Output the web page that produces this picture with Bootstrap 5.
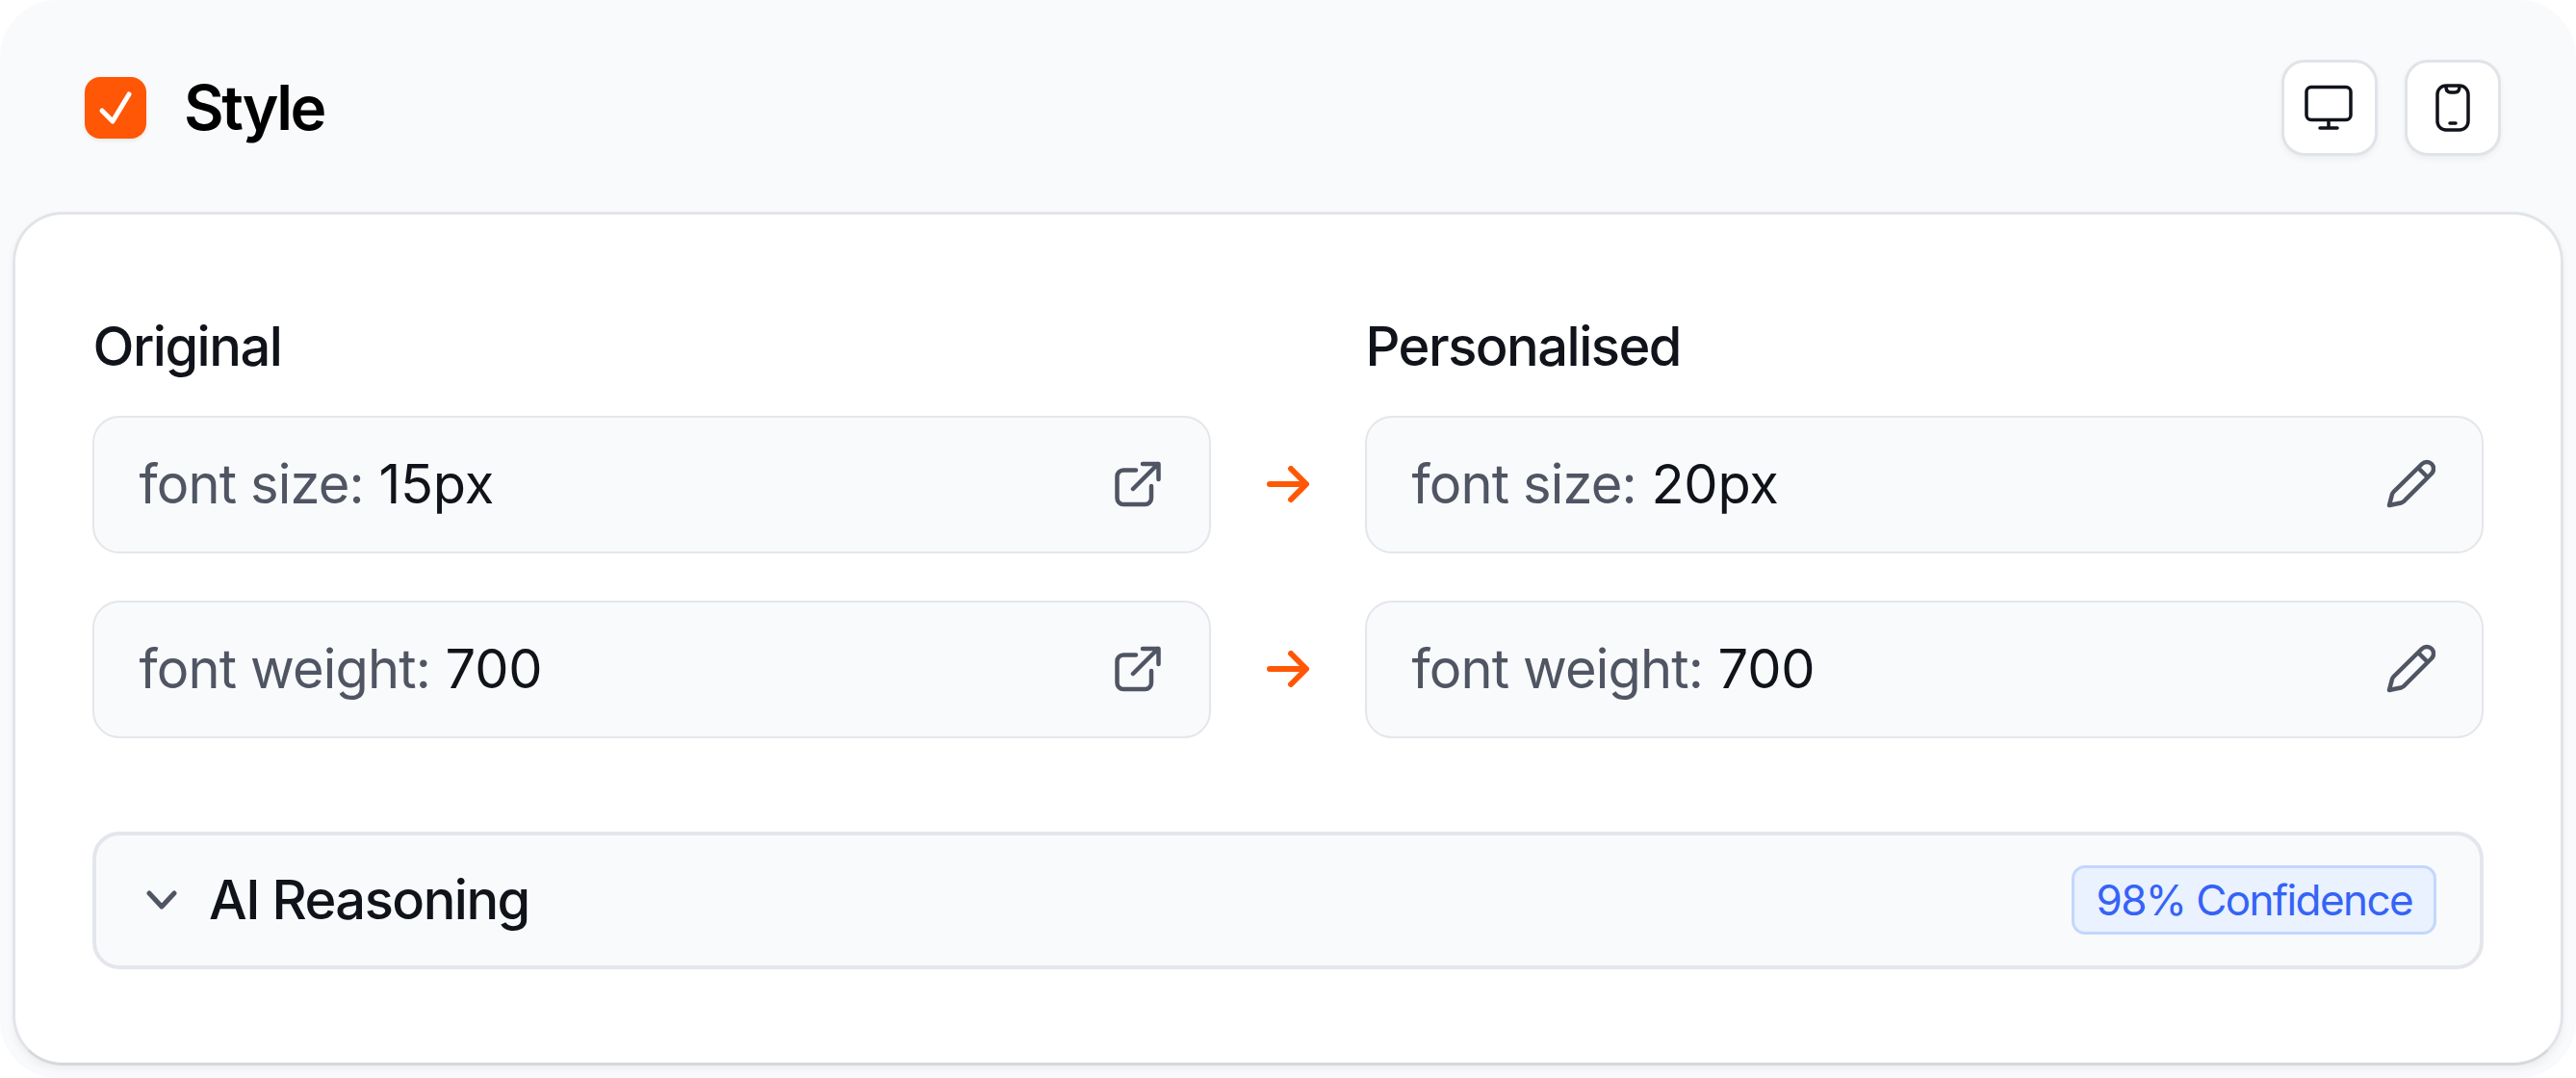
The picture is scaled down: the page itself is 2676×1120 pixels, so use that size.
<!DOCTYPE html>
<html lang="en">
<head>
<meta charset="utf-8">
<title>Style</title>
<link href="https://cdn.jsdelivr.net/npm/bootstrap@5.3.0/dist/css/bootstrap.min.css" rel="stylesheet">
<style>
html,body{margin:0;background:#fff;font-family:Inter,"Liberation Sans",sans-serif;}
body{width:2676px;height:1120px;overflow:hidden;}
.frame{width:2676px;height:1120px;background:#f9fafb;border-radius:60px;display:flex;flex-direction:column;padding:0 13px 13px;}
.head{height:220px;flex:none;padding:0 65px 0 75px;}
.logo{width:64px;height:64px;border-radius:16px;background:#ff5705;box-shadow:0 2px 4px rgba(0,0,0,.08);margin-top:4px;}
.logo svg{display:block;}
.ttl{font-size:64px;font-weight:600;color:#000;margin-left:39px;line-height:1;letter-spacing:-2.4px;margin-top:4px;}
.tools{gap:28px;}
.tool{width:100px;height:100px;background:#fff;border:3px solid #e1e3e9;border-radius:24px;box-shadow:0 3px 6px rgba(0,0,0,.05);padding:0;margin-top:4px;}
.panel{flex:1;background:#fff;border:3.5px solid #e2e4ea;border-bottom-color:#d6d8dd;border-radius:52px;box-shadow:0 4px 8px rgba(0,0,0,.05);padding:0 80px;}
.lbl{font-size:56px;font-weight:500;line-height:1;color:#10131a;height:40px;margin-top:116.5px;margin-bottom:52px;padding-left:.5px;letter-spacing:-1.5px;display:flex;align-items:center;}
.cols{display:grid;grid-template-columns:1162px 160px 1162px;}
.cell{height:143px;background:#f9fafb;border:2px solid #e4e6eb;border-radius:28px;padding:0 50px 0 46.5px;font-size:56px;letter-spacing:-.2px;color:#10131a;}
.cell.edit{padding-right:48px;}
.k{color:#4f5563;letter-spacing:-.85px;}
.gaprow{height:49px;grid-column:1/4;}
.reason{height:143px;background:#f9fafb;border:4px solid #e3e6eb;border-radius:28px;margin-top:97px;padding:0 45px 0 52px;}
.reason-t{font-size:56px;font-weight:500;color:#10131a;margin-left:33px;letter-spacing:-1.5px;}
.conf{height:72px;background:#eaf1ff;border:3px solid #c3d7fe;border-radius:14px;color:#3563f6;font-size:44px;letter-spacing:-1.6px;padding:0 22px;font-weight:400;}
</style>
</head>
<body>
<div class="frame">
  <div class="head d-flex align-items-center">
    <div class="logo"><svg width="64" height="64" viewBox="0 0 64 64" fill="none"><path d="M18 35L29 46L46 18" stroke="#fff" stroke-width="5" stroke-linecap="round" stroke-linejoin="round"/></svg></div>
    <div class="ttl">Style</div>
    <div class="ms-auto d-flex tools">
      <button type="button" class="tool d-flex align-items-center justify-content-center" aria-label="Desktop"><svg width="64" height="64" viewBox="0 0 64 64" fill="none" stroke="#10131a" stroke-width="3.500" stroke-linecap="round" stroke-linejoin="round"><rect x="8" y="10.500" width="46" height="34" rx="5"/><path d="M31 45V53M22 53H40"/></svg></button>
      <button type="button" class="tool d-flex align-items-center justify-content-center" aria-label="Mobile"><svg width="64" height="64" viewBox="0 0 64 64" fill="none" stroke="#10131a" stroke-width="3.500" stroke-linecap="round" stroke-linejoin="round"><rect x="16" y="9" width="32" height="46" rx="9"/><path d="M25 10c0 4 2 6 5 6h4c3 0 5-2 5-6M29 48H35"/></svg></button>
    </div>
  </div>
  <div class="panel">
    <div class="cols">
      <div class="lbl">Original</div><div></div><div class="lbl">Personalised</div>
      <div class="cell d-flex align-items-center justify-content-between"><span><span class="k">font size:</span> 15px</span>
        <svg width="48" height="48" viewBox="0 0 48 48" fill="none" stroke="#4f5563" stroke-width="4.500" stroke-linecap="round" stroke-linejoin="round"><path d="M22 9.500H9a6.500 6.500 0 0 0-6.500 6.500V38.500a6.500 6.500 0 0 0 6.500 6.500H31.500a6.500 6.500 0 0 0 6.500-6.500V26M19 29L45 3M29 3H45.500V19"/></svg></div>
      <div class="d-flex align-items-center justify-content-center"><svg width="44" height="38" viewBox="0 0 44 38" fill="none" stroke="#ff5705" stroke-width="6" stroke-linecap="round" stroke-linejoin="round"><path d="M3 19H40M25 3L41 19L25 35"/></svg></div>
      <div class="cell edit d-flex align-items-center justify-content-between"><span><span class="k">font size:</span> 20px</span>
        <svg width="52" height="52" viewBox="0 0 52 52" fill="none" stroke="#4f5563" stroke-width="4.500" stroke-linecap="round" stroke-linejoin="round"><path d="M4 48L7 36.500Q7.500 35 9 33.500L38 5a7 7 0 0 1 10 10L19 44Q17.500 45 16 45.500ZM34 9L43 18"/></svg></div>
      <div class="gaprow"></div>
      <div class="cell d-flex align-items-center justify-content-between"><span><span class="k">font weight:</span> 700</span>
        <svg width="48" height="48" viewBox="0 0 48 48" fill="none" stroke="#4f5563" stroke-width="4.500" stroke-linecap="round" stroke-linejoin="round"><path d="M22 9.500H9a6.500 6.500 0 0 0-6.500 6.500V38.500a6.500 6.500 0 0 0 6.500 6.500H31.500a6.500 6.500 0 0 0 6.500-6.500V26M19 29L45 3M29 3H45.500V19"/></svg></div>
      <div class="d-flex align-items-center justify-content-center"><svg width="44" height="38" viewBox="0 0 44 38" fill="none" stroke="#ff5705" stroke-width="6" stroke-linecap="round" stroke-linejoin="round"><path d="M3 19H40M25 3L41 19L25 35"/></svg></div>
      <div class="cell edit d-flex align-items-center justify-content-between"><span><span class="k">font weight:</span> 700</span>
        <svg width="52" height="52" viewBox="0 0 52 52" fill="none" stroke="#4f5563" stroke-width="4.500" stroke-linecap="round" stroke-linejoin="round"><path d="M4 48L7 36.500Q7.500 35 9 33.500L38 5a7 7 0 0 1 10 10L19 44Q17.500 45 16 45.500ZM34 9L43 18"/></svg></div>
    </div>
    <div class="reason d-flex align-items-center">
      <svg width="32" height="20" viewBox="0 0 32 20" fill="none" stroke="#4f5563" stroke-width="5" stroke-linecap="round" stroke-linejoin="round"><path d="M3 3L16 17L29 3"/></svg>
      <span class="reason-t">AI Reasoning</span>
      <span class="conf ms-auto d-inline-flex align-items-center">98% Confidence</span>
    </div>
  </div>
</div>
<script src="https://cdn.jsdelivr.net/npm/bootstrap@5.3.0/dist/js/bootstrap.bundle.min.js"></script>
</body>
</html>
